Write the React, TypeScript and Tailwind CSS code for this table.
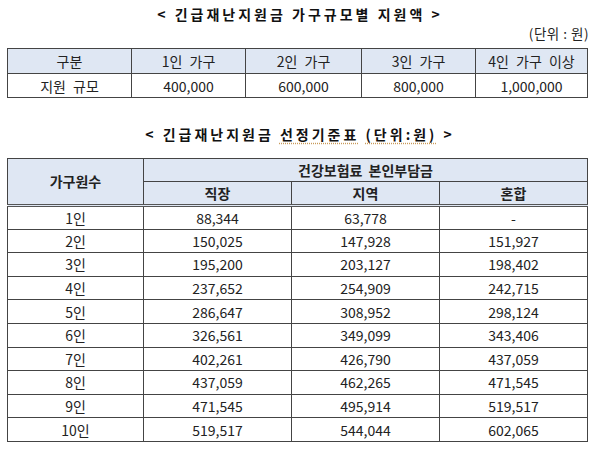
import React from "react";

const font = { fontFamily: '"Noto Sans CJK KR", "Noto Sans", sans-serif' };

const top = [
  ["1인 가구", "400,000"],
  ["2인 가구", "600,000"],
  ["3인 가구", "800,000"],
  ["4인 가구 이상", "1,000,000"],
];
const topW = ["w-[124px]", "w-[114px]", "w-[116px]", "w-[114px]", "w-[112px]"];

const rows = [
  ["1인", "88,344", "63,778", "-"],
  ["2인", "150,025", "147,928", "151,927"],
  ["3인", "195,200", "203,127", "198,402"],
  ["4인", "237,652", "254,909", "242,715"],
  ["5인", "286,647", "308,952", "298,124"],
  ["6인", "326,561", "349,099", "343,406"],
  ["7인", "402,261", "426,790", "437,059"],
  ["8인", "437,059", "462,265", "471,545"],
  ["9인", "471,545", "495,914", "519,517"],
  ["10인", "519,517", "544,044", "602,065"],
];

export default function App() {
  return (
    <div className="w-[600px] h-[450px] bg-white text-[#222] overflow-hidden" style={font}>
      <div className="pt-[4px] h-[24px] leading-[20px] text-[14px] font-bold text-center tracking-[3px] text-[#111]">
        &lt; 긴급재난지원금 가구규모별 지원액 &gt;
      </div>
      <div className="h-[18px] leading-[18px] text-[13.5px] text-right pr-[11px] tracking-[0.5px]">
        (단위 : 원)
      </div>
      <div className="pl-[7px] mt-[6px]">
        <table className="border-collapse border-[1.5px] border-[#333] text-[14px] table-fixed w-[580px]">
          <tbody>
            <tr className="h-[25px] bg-[#dfe7f3]">
              <td className={`${topW[0]} border border-[#444] text-center leading-[22px] p-0`}>구분</td>
              {top.map((t, i) => (
                <td key={i} className={`${topW[i + 1]} border border-[#444] text-center leading-[22px] p-0 [word-spacing:4px]`}>
                  {t[0]}
                </td>
              ))}
            </tr>
            <tr className="h-[24px]">
              <td className="border border-[#444] text-center leading-[22px] p-0 [word-spacing:4px]">지원 규모</td>
              {top.map((t, i) => (
                <td key={i} className="border border-[#444] text-center leading-[22px] p-0">
                  {t[1]}
                </td>
              ))}
            </tr>
          </tbody>
        </table>
      </div>
      <div className="mt-[26px] h-[20px] leading-[20px] text-[14px] font-bold text-center tracking-[3px] text-[#111]">
        &lt; 긴급재난지원금{" "}
        <span className="underline decoration-dotted decoration-[#c89a5a] underline-offset-[3px]">선정기준표</span>{" "}
        <span className="underline decoration-dotted decoration-[#c89a5a] underline-offset-[3px]">(단위:원)</span> &gt;
      </div>
      <div className="pl-[7px] mt-[14px]">
        <table className="border-collapse border-[1.5px] border-[#333] text-[14px] table-fixed w-[581px]">
          <thead>
            <tr className="h-[23px] bg-[#dfe7f3]">
              <th rowSpan={2} className="w-[136px] border border-[#444] border-b-[3px] border-b-[#555] border-double font-semibold text-center p-0">
                가구원수
              </th>
              <th colSpan={3} className="border border-[#444] font-semibold text-center p-0 [word-spacing:3px]">
                건강보험료 본인부담금
              </th>
            </tr>
            <tr className="h-[24px] bg-[#dfe7f3]">
              <th className="w-[149px] border border-[#444] border-b-[3px] border-b-[#555] border-double font-semibold text-center p-0">직장</th>
              <th className="w-[149px] border border-[#444] border-b-[3px] border-b-[#555] border-double font-semibold text-center p-0">지역</th>
              <th className="w-[147px] border border-[#444] border-b-[3px] border-b-[#555] border-double font-semibold text-center p-0">혼합</th>
            </tr>
          </thead>
          <tbody>
            {rows.map((r, i) => (
              <tr key={i} className="h-[23.6px]">
                {r.map((c, j) => (
                  <td key={j} className="border border-[#444] text-center leading-[20px] p-0">
                    {c}
                  </td>
                ))}
              </tr>
            ))}
          </tbody>
        </table>
      </div>
    </div>
  );
}
